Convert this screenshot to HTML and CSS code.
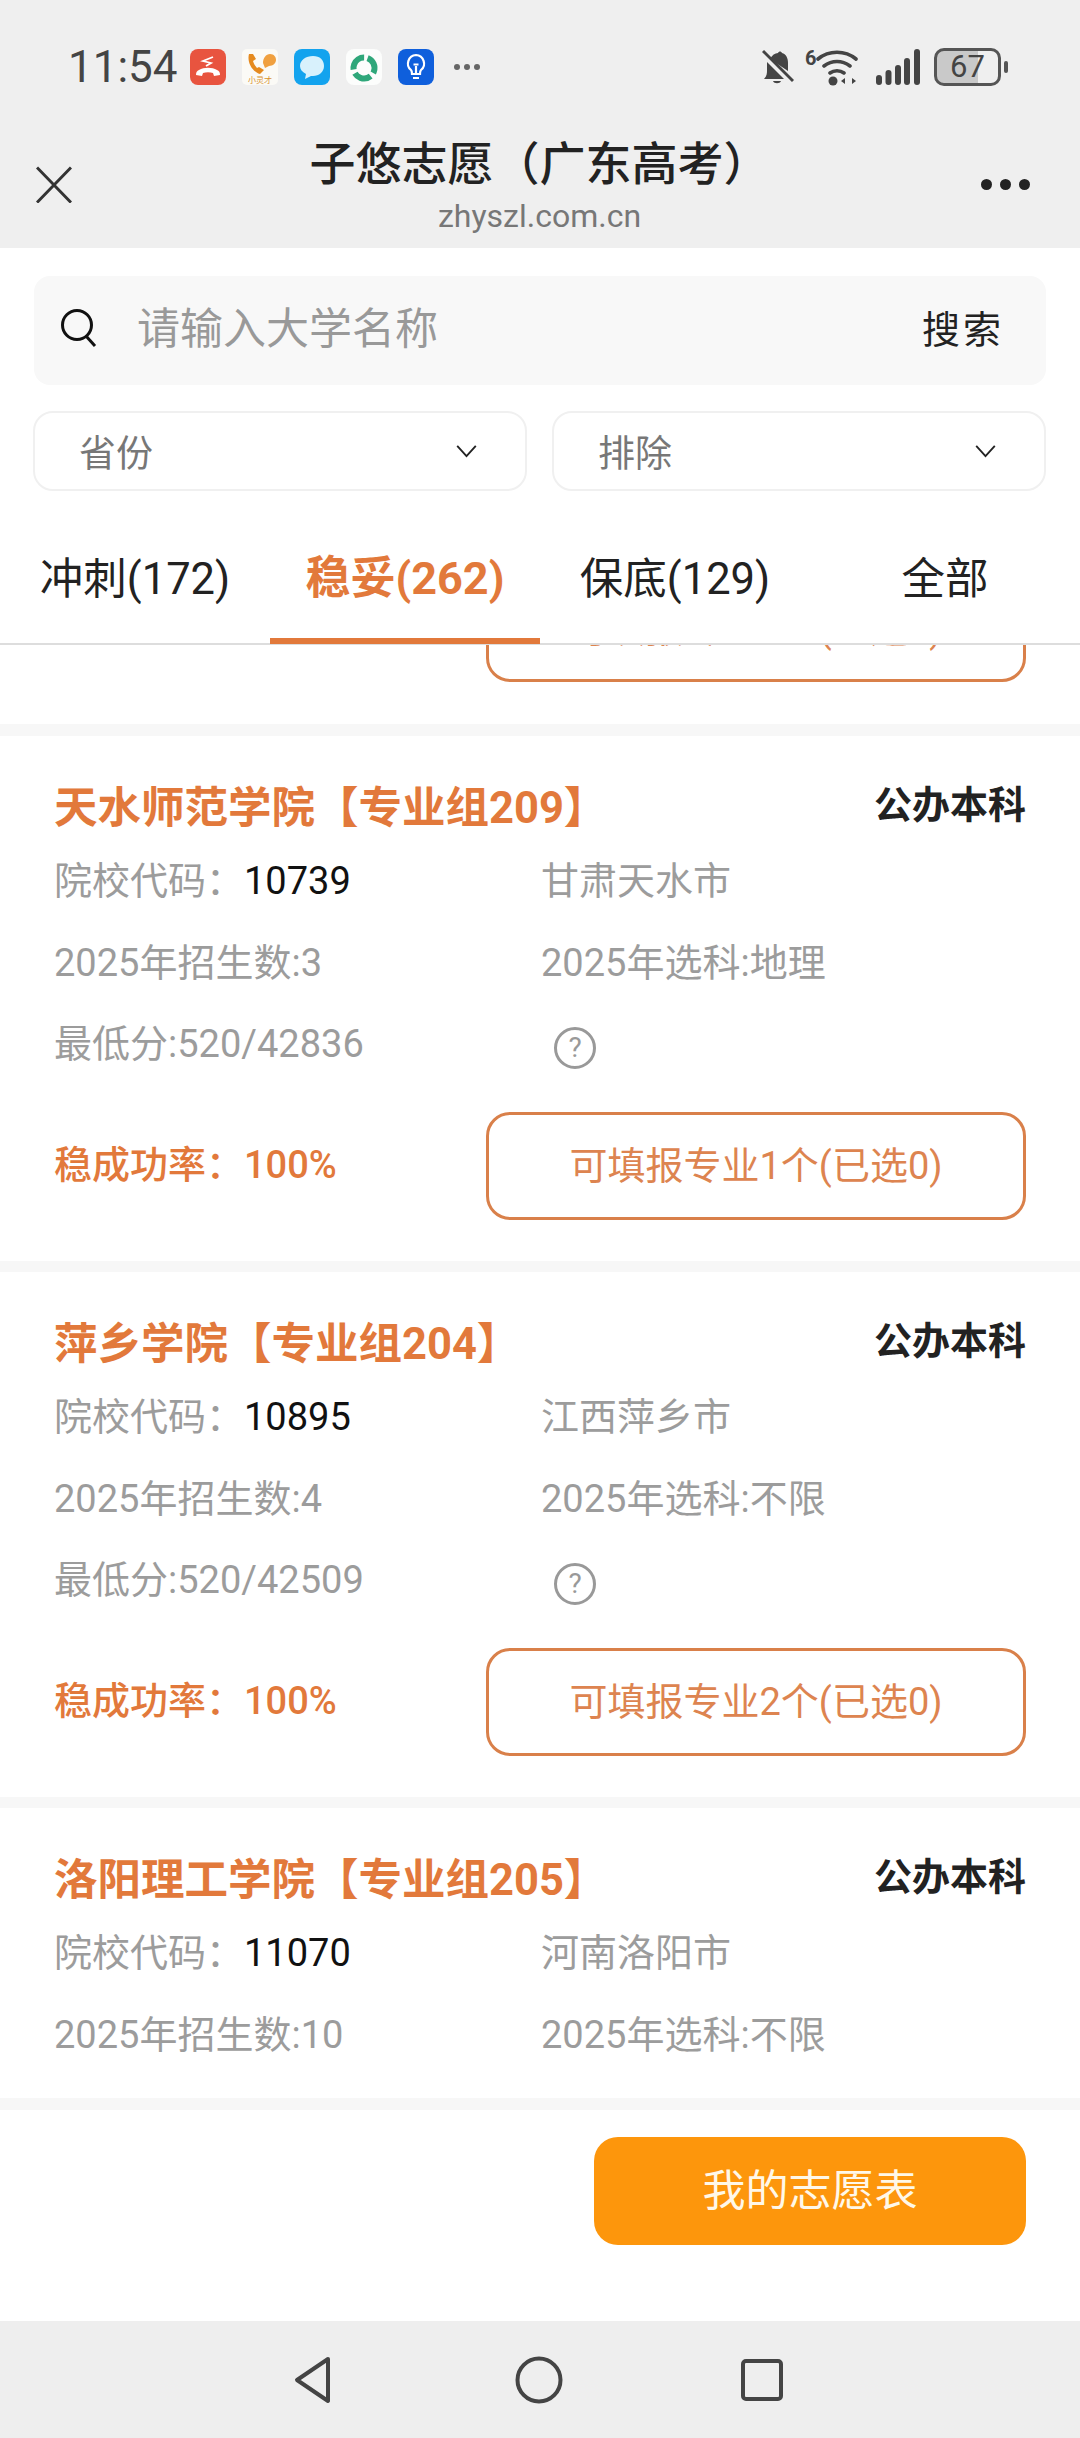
FILE: index.html
```html
<!DOCTYPE html>
<html lang="zh">
<head>
    <meta charset="UTF-8">
    <meta name="viewport" content="width=device-width, initial-scale=1.0">
    <title>子悠志愿(广东高考)</title>
    <link rel="stylesheet" href="styles.css">
</head>
<body>
    <header class="top">
        <div class="status">
            <span class="time">11:54</span>
            <div class="apps">
                <svg class="app" viewBox="0 0 36 36"><rect width="36" height="36" rx="8" fill="#e8543f"/><path d="M6 26c0-3 1-4 3-5 5-3 13-3 18 0 2 1 3 2 3 5l-6 1-1-3c-3-1-7-1-10 0l-1 3z" fill="#fff"/><path d="M23 8l-10 4 8 2-5 3" fill="none" stroke="#fff" stroke-width="1.800"/></svg>
                <svg class="app" viewBox="0 0 36 36"><rect width="36" height="36" rx="5" fill="#fbfaf6"/><path d="M21 14c0-5 3-9 7-9s6 3 6 6-3 6-7 6l-4 2z" fill="#f0a040"/><path d="M7 5c-2 7 2 17 11 20l4-4-5-3-2 1c-2-2-3-4-4-7l3-2-3-5z" fill="#e58a1f"/><text class="app-label" x="18" y="34">小灵才</text></svg>
                <svg class="app" viewBox="0 0 36 36"><rect width="36" height="36" rx="8" fill="#13a3ee"/><path d="M19 7c7 0 11 4 11 10s-5 10-11 10h-2l-6 3 1-5c-4-2-6-5-6-8 0-6 6-10 13-10z" fill="#d8f1fc"/></svg>
                <svg class="app" viewBox="0 0 36 36"><rect width="36" height="36" rx="8" fill="#fcfdfc"/><circle class="ring" cx="18" cy="19" r="10.500" transform="rotate(-70 18 19)"/></svg>
                <svg class="app" viewBox="0 0 36 36"><rect width="36" height="36" rx="8" fill="#0f5fdc"/><path d="M18 6a8.500 8.500 0 0 0-5 15c1 1 1 2 1 4h8c0-2 0-3 1-4a8.500 8.500 0 0 0-5-15z" fill="none" stroke="#fff" stroke-width="2.200"/><path d="M15 29h6M18 25v-8M15.500 15.500h5" stroke="#fff" stroke-width="2.200" fill="none"/></svg>
                <div class="more-small"><i></i><i></i><i></i></div>
            </div>
            <div class="sys">
                <svg class="bell" viewBox="0 0 32 36"><path d="M8 10c2-4 5-6 8-6 1-2 3-2 4 0 4 1 6 5 6 10v8z" fill="#444"/><path d="M5 13l17 17H2c3-3 3-6 3-9z" fill="#444"/><path d="M11 32h8c-1 3-7 3-8 0z" fill="#444"/><path d="M1 2l30 30" stroke="#444" stroke-width="3"/><path d="M1 6l26 26" stroke="#efefef" stroke-width="2"/></svg>
                <div class="wifi">
                    <span class="wifi-num">6</span>
                    <svg class="wifi-icon" viewBox="0 0 42 38"><path d="M2 11c11-9 27-9 38 0M8 18c8-6 18-6 26 0M14 25c4-3 10-3 14 0" fill="none" stroke="#444" stroke-width="3.600" stroke-linecap="round"/><circle cx="17" cy="33" r="4.500" fill="#444"/><path d="M25 33l4-3v6zM32 29v8M36 30l4 3-4 3z" fill="#444"/></svg>
                </div>
                <svg class="signal" viewBox="0 0 44 36"><rect x="0" y="26" width="6" height="10" rx="3" fill="#444"/><rect x="9.500" y="21" width="6" height="15" rx="3" fill="#444"/><rect x="19" y="16" width="6" height="20" rx="3" fill="#444"/><rect x="28" y="9" width="6" height="27" rx="3" fill="#444"/><rect x="38" y="0" width="6" height="36" rx="3" fill="#444"/></svg>
                <div class="battery"><span>67</span></div>
                <i class="battery-nub"></i>
            </div>
        </div>
        <div class="nav">
            <svg class="close" viewBox="0 0 36 36"><path d="M1 1l34 35M35 1L1 36" fill="none" stroke="#333" stroke-width="3"/></svg>
            <div class="nav-title">
                <h1>子悠志愿（广东高考）</h1>
                <p>zhyszl.com.cn</p>
            </div>
            <div class="more"><i></i><i></i><i></i></div>
        </div>
    </header>

    <section class="filters">
        <div class="search">
            <svg class="search-icon" viewBox="0 0 38 40"><circle cx="17" cy="17" r="14.500" fill="none" stroke="#111" stroke-width="3"/><path d="M26 28l9 10" stroke="#111" stroke-width="3"/></svg>
            <span class="placeholder">请输入大学名称</span>
            <span class="search-btn">搜索</span>
        </div>
        <div class="selects">
            <div class="select"><span>省份</span><svg class="chevron" viewBox="0 0 22 14"><path d="M1 1l10 11L21 1" fill="none" stroke="#222" stroke-width="2"/></svg></div>
            <div class="select"><span>排除</span><svg class="chevron" viewBox="0 0 22 14"><path d="M1 1l10 11L21 1" fill="none" stroke="#222" stroke-width="2"/></svg></div>
        </div>
        <div class="tabs">
            <div class="tab">冲刺(172)</div>
            <div class="tab active">稳妥(262)</div>
            <div class="tab">保底(129)</div>
            <div class="tab">全部</div>
        </div>
    </section>

    <main class="list">
        <div class="stub">
            <div class="pick">可填报专业1个(已选0)</div>
        </div>

        <article class="card">
            <div class="card-head">
                <h2>天水师范学院【专业组209】</h2>
                <span class="kind">公办本科</span>
            </div>
            <div class="rows">
                <div>院校代码：<b>10739</b></div>
                <div>甘肃天水市</div>
                <div>2025年招生数:3</div>
                <div>2025年选科:地理</div>
                <div>最低分:520/42836</div>
                <div><span class="help">?</span></div>
            </div>
            <div class="card-foot">
                <span class="rate">稳成功率：100%</span>
                <div class="pick">可填报专业1个(已选0)</div>
            </div>
        </article>

        <article class="card">
            <div class="card-head">
                <h2>萍乡学院【专业组204】</h2>
                <span class="kind">公办本科</span>
            </div>
            <div class="rows">
                <div>院校代码：<b>10895</b></div>
                <div>江西萍乡市</div>
                <div>2025年招生数:4</div>
                <div>2025年选科:不限</div>
                <div>最低分:520/42509</div>
                <div><span class="help">?</span></div>
            </div>
            <div class="card-foot">
                <span class="rate">稳成功率：100%</span>
                <div class="pick">可填报专业2个(已选0)</div>
            </div>
        </article>

        <article class="card">
            <div class="card-head">
                <h2>洛阳理工学院【专业组205】</h2>
                <span class="kind">公办本科</span>
            </div>
            <div class="rows">
                <div>院校代码：<b>11070</b></div>
                <div>河南洛阳市</div>
                <div>2025年招生数:10</div>
                <div>2025年选科:不限</div>
            </div>
        </article>
    </main>

    <footer class="bottom">
        <button class="wish">我的志愿表</button>
    </footer>

    <nav class="sysnav">
        <svg class="back" viewBox="0 0 42 48"><path d="M36 3L5 24l31 21z" fill="none" stroke="#444" stroke-width="4" stroke-linejoin="round"/></svg>
        <svg class="home" viewBox="0 0 48 48"><circle cx="24" cy="24" r="21.500" fill="none" stroke="#444" stroke-width="4"/></svg>
        <svg class="recent" viewBox="0 0 42 42"><rect x="2" y="2" width="38" height="38" rx="3" fill="none" stroke="#444" stroke-width="4"/></svg>
    </nav>
</body>
</html>
```

FILE: styles.css
```css
* {
    box-sizing: border-box;
}
body {
    margin: 0;
    width: 1080px;
    height: 2438px;
    display: flex;
    flex-direction: column;
    overflow: hidden;
    background: #fff;
    font-family: Roboto, "Noto Sans CJK SC", sans-serif;
}
h1, h2, p {
    margin: 0;
}

/* status bar + title */
.top {
    height: 248px;
    background: #efefef;
    flex: none;
}
.status {
    height: 105px;
    padding: 48px 72px 0 68px;
    display: flex;
    align-items: flex-start;
}
.time {
    font-size: 44px;
    line-height: 38px;
    color: #444;
    width: 122px;
}
.apps {
    display: flex;
    align-items: center;
    gap: 16px;
    height: 38px;
}
.app {
    width: 36px;
    height: 36px;
}
.app-label {
    font-size: 8px;
    fill: #d9902c;
    text-anchor: middle;
}
.ring {
    fill: none;
    stroke: #2fa77a;
    stroke-width: 6;
    stroke-dasharray: 18 4;
}
.more-small {
    display: flex;
    gap: 4px;
    margin-left: 4px;
}
.more-small i {
    width: 6px;
    height: 6px;
    border-radius: 50%;
    background: #666;
}
.sys {
    margin-left: auto;
    display: flex;
    align-items: center;
    height: 38px;
}
.bell {
    width: 32px;
    height: 36px;
    margin-right: 11px;
}
.wifi {
    display: flex;
    align-items: flex-start;
    margin-right: 18px;
}
.wifi-num {
    font-size: 20px;
    line-height: 20px;
    font-weight: 700;
    color: #444;
    width: 11px;
}
.wifi-icon {
    width: 42px;
    height: 38px;
}
.signal {
    width: 44px;
    height: 36px;
    margin-right: 14px;
}
.battery {
    width: 67px;
    height: 38px;
    border: 3px solid #555;
    border-radius: 10px;
    background: linear-gradient(to right, #c9c9c9 68%, #efefef 68%);
    text-align: center;
    font-size: 31px;
    line-height: 32px;
    color: #444;
}
.battery-nub {
    width: 4px;
    height: 12px;
    margin-left: 3px;
    border-radius: 2px;
    background: #555;
}
.nav {
    display: flex;
    align-items: flex-start;
    height: 143px;
    padding: 0 50px 0 36px;
}
.close {
    width: 36px;
    height: 37px;
    margin-top: 61px;
}
.nav-title {
    flex: 1;
    text-align: center;
    padding: 29px 0 0 26px;
}
.nav-title h1 {
    font-size: 46px;
    line-height: 60px;
    font-weight: 500;
    color: #222;
}
.nav-title p {
    font-size: 32px;
    line-height: 40px;
    color: #777;
    margin-top: 2px;
}
.more {
    display: flex;
    gap: 8px;
    margin-top: 74px;
}
.more i {
    width: 11px;
    height: 11px;
    border-radius: 50%;
    background: #222;
}

/* search, selects, tabs */
.filters {
    flex: none;
    padding-top: 28px;
}
.search {
    margin: 0 34px;
    height: 109px;
    border-radius: 16px;
    background: #f8f8f8;
    display: flex;
    align-items: center;
    padding: 0 42px 0 26px;
}
.search-icon {
    width: 38px;
    height: 40px;
    margin: 0 39px 6px 0;
}
.placeholder {
    flex: 1;
    font-size: 43px;
    color: #999;
    margin-bottom: 12px;
}
.search-btn {
    font-size: 38px;
    letter-spacing: 3px;
    color: #222;
    margin-bottom: 8px;
}
.selects {
    margin: 26px 34px 0 33px;
    display: flex;
    gap: 25px;
}
.select {
    flex: 1;
    height: 80px;
    border: 2px solid #f0f0f0;
    border-radius: 20px;
    display: flex;
    align-items: center;
    justify-content: space-between;
    padding: 0 48px 0 44px;
    font-size: 37px;
    color: #777;
}
.chevron {
    width: 21px;
    height: 13px;
}
.tabs {
    display: flex;
    height: 154px;
    border-bottom: 2px solid #ddd;
}
.tab {
    flex: 1;
    display: flex;
    align-items: center;
    justify-content: center;
    padding-top: 16px;
    font-size: 43.500px;
    color: #222;
}
.tab.active {
    color: #e2793b;
    font-size: 45px;
    font-weight: 700;
    border-bottom: 6px solid #e2793b;
    margin-bottom: -1px;
    padding-top: 19px;
}

/* school list */
.list {
    flex: 1;
    min-height: 0;
    overflow: hidden;
    background: #fff;
}
.stub {
    height: 91px;
    border-bottom: 12px solid #f7f7f7;
    padding-left: 486px;
    padding-right: 54px;
    overflow: hidden;
}
.stub .pick {
    margin-top: -71px;
}
.card {
    height: 536px;
    padding: 43px 54px 0 54px;
    border-bottom: 11px solid #f7f7f7;
}
.card-head {
    display: flex;
    justify-content: space-between;
    align-items: flex-start;
    height: 57px;
}
.card-head h2 {
    font-size: 43.500px;
    line-height: 60px;
    font-weight: 700;
    color: #e2793b;
}
.kind {
    font-size: 38px;
    line-height: 52px;
    font-weight: 700;
    color: #222;
}
.rows {
    display: grid;
    grid-template-columns: 487px 1fr;
    grid-auto-rows: 81.500px;
    align-items: center;
    margin-top: 4px;
    font-size: 38px;
    color: #9c9c9c;
}
.rows > div {
    padding-bottom: 6px;
}
.rows b {
    font-weight: 400;
    color: #111;
}
.help {
    display: block;
    width: 42px;
    height: 42px;
    margin: 14px 0 0 13px;
    border: 3px solid #999;
    border-radius: 50%;
    text-align: center;
    font-size: 28px;
    line-height: 36px;
    color: #999;
}
.card-foot {
    display: flex;
    align-items: center;
    justify-content: space-between;
    margin-top: 27px;
}
.rate {
    font-size: 38px;
    font-weight: 500;
    color: #e2793b;
    margin-bottom: 8px;
}
.pick {
    width: 540px;
    height: 108px;
    border: 3px solid #d9804a;
    border-radius: 24px;
    display: flex;
    align-items: center;
    justify-content: center;
    padding-bottom: 6px;
    font-size: 38px;
    color: #dd8450;
}

/* bottom */
.bottom {
    flex: none;
    height: 223px;
    border-top: 12px solid #f7f7f7;
    padding: 27px 54px 0 0;
    display: flex;
    justify-content: flex-end;
    align-items: flex-start;
}
.wish {
    width: 432px;
    height: 108px;
    border: none;
    border-radius: 24px;
    background: #fd960c;
    padding: 0 0 8px;
    font-family: inherit;
    font-size: 43px;
    color: #fff8e8;
}
.sysnav {
    flex: none;
    height: 117px;
    background: #eee;
    display: flex;
    align-items: center;
    justify-content: center;
    gap: 178px;
    padding-right: 5px;
}
.back {
    width: 42px;
    height: 48px;
    margin-right: 3px;
}
.home {
    width: 48px;
    height: 48px;
}
.recent {
    width: 42px;
    height: 42px;
}
```
